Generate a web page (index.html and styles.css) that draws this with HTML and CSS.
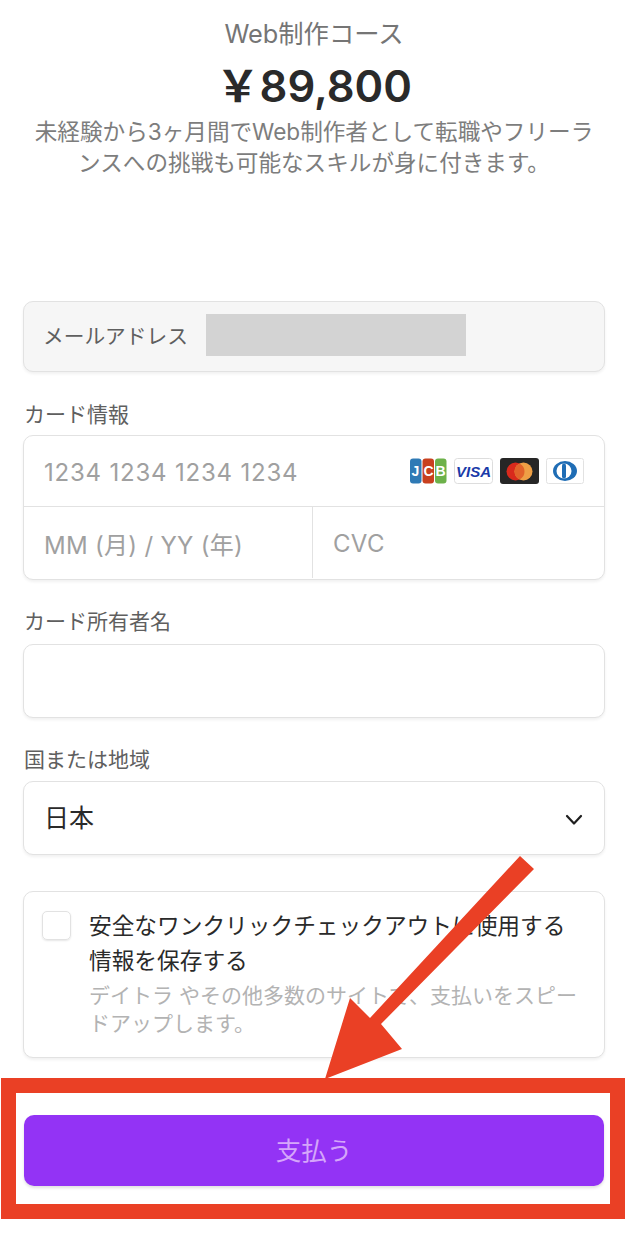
FILE: index.html
```html
<!DOCTYPE html>
<html lang="ja">
<head>
<meta charset="utf-8">
<title>支払い</title>
<link rel="stylesheet" href="styles.css">
</head>
<body>
<main class="page">
  <header class="summary">
    <div class="course">Web制作コース</div>
    <div class="price">&#xFFE5;89,800</div>
    <p class="desc">未経験から3ヶ月間でWeb制作者として転職やフリーランスへの挑戦も可能なスキルが身に付きます。</p>
  </header>

  <div class="field email">
    <span class="email-label">メールアドレス</span>
    <span class="redacted"></span>
  </div>

  <div class="label label-card">カード情報</div>
  <div class="field card">
    <div class="card-row">
      <span class="ph ph-num">1234 1234 1234 1234</span>
      <span class="brands">
        <svg class="brand" width="38" height="26" viewBox="0 0 38 26">
          <rect x="1" y="0.5" width="11.500" height="25" rx="3" fill="#2f7ab5"/>
          <rect x="13.500" y="0.5" width="11.500" height="25" rx="3" fill="#c8401f"/>
          <rect x="26" y="0.5" width="11.500" height="25" rx="3" fill="#6db14a"/>
          <text class="jcb" x="6.500" y="17.500">J</text>
          <text class="jcb" x="19.500" y="17.500">C</text>
          <text class="jcb" x="31.500" y="17.500">B</text>
        </svg>
        <svg class="brand" width="39" height="26" viewBox="0 0 39 26">
          <rect x="0.500" y="0.500" width="38" height="25" rx="3" fill="#fff" stroke="#ddd"/>
          <text class="visa" x="19.500" y="18.500">VISA</text>
        </svg>
        <svg class="brand" width="39" height="26" viewBox="0 0 39 26">
          <rect x="0" y="0" width="39" height="26" rx="3" fill="#262626"/>
          <circle cx="15.500" cy="13.500" r="9" fill="#d9291c"/>
          <circle cx="23.500" cy="13.500" r="9" fill="#ee9f45"/>
          <path d="M19.500 5.440a9 9 0 0 1 0 16.120a9 9 0 0 1 0-16.120z" fill="#e2622a"/>
        </svg>
        <svg class="brand" width="38" height="26" viewBox="0 0 38 26">
          <rect x="0.500" y="0.500" width="37" height="25" rx="2" fill="#fff" stroke="#e2e2e2"/>
          <ellipse cx="19" cy="13" rx="12" ry="10" fill="#1f6db5"/>
          <circle cx="18" cy="13" r="7.500" fill="#fff"/>
          <rect x="16" y="5.500" width="4" height="15" rx="2" fill="#1f6db5"/>
        </svg>
      </span>
    </div>
    <div class="card-split">
      <span class="ph cell cell-exp">MM (月) / YY (年)</span>
      <span class="ph cell cell-cvc">CVC</span>
    </div>
  </div>

  <div class="label label-name">カード所有者名</div>
  <div class="field blank"></div>

  <div class="label label-country">国または地域</div>
  <div class="field select">
    <span class="select-value">日本</span>
    <svg class="chevron" width="18" height="12" viewBox="0 0 18 12"><path d="M2 2l7 7.500L16 2" fill="none" stroke="#1f1f1f" stroke-width="2.200" stroke-linecap="round" stroke-linejoin="round"/></svg>
  </div>

  <div class="field save">
    <span class="checkbox"></span>
    <div class="save-text">
      <div class="save-title">安全なワンクリックチェックアウトに使用する情報を保存する</div>
      <div class="save-sub">デイトラ やその他多数のサイトで、支払いをスピードアップします。</div>
    </div>
  </div>

  <button class="pay" type="button">支払う</button>
</main>

<div class="frame"></div>
<svg class="arrow" width="626" height="1248" viewBox="0 0 626 1248">
  <polygon points="520,856 534,869 381,1024 402,1049 325,1079 350,998 370,1018" fill="#ea4025"/>
</svg>
</body>
</html>
```
FILE: styles.css
```css
* { box-sizing: border-box; }
html, body { margin: 0; padding: 0; background: #fff; }
body {
  position: relative;
  width: 626px;
  height: 1248px;
  overflow: hidden;
  font-family: Inter, "Noto Sans CJK JP", sans-serif;
  color: #1f1f1f;
}
.page { padding: 17px 21px 0 23px; }

.summary { text-align: center; height: 284px; }
.course { font-size: 25.300px; line-height: 34px; color: #757575; }
.price {
  margin-top: 8px;
  font-size: 43.500px;
  line-height: 54px;
  font-weight: 600;
  color: #2a2a2a;
}
.desc {
  margin: 3px 0 0;
  padding: 0 9px;
  font-size: 22.600px;
  line-height: 31px;
  color: #7d7d7d;
}

.field {
  background: #fff;
  border: 1.500px solid #e2e2e2;
  border-radius: 10px;
  box-shadow: 0 2px 3px rgba(0, 0, 0, 0.06);
}

.email {
  display: flex;
  align-items: center;
  height: 71px;
  padding: 0 0 4px 19px;
  background: #f6f6f6;
}
.email-label { font-size: 20.700px; color: #5f5f5f; width: 163px; }
.redacted { display: block; width: 260px; height: 42px; background: #d3d3d3; }

.label { font-size: 21px; line-height: 26px; color: #5f5f5f; padding-left: 1px; }
.label-card { margin-top: 30px; }
.label-name { margin-top: 29px; }
.label-country { margin-top: 29px; }

.card { margin-top: 7px; height: 145px; }
.card-row {
  display: flex;
  align-items: center;
  justify-content: space-between;
  height: 71px;
  padding: 0 20px;
  border-bottom: 1.500px solid #e2e2e2;
}
.ph { font-size: 24px; color: #a0a0a0; letter-spacing: 0.300px; }
.ph-num { letter-spacing: 0.800px; padding-top: 2px; }
.brands { display: flex; align-items: center; gap: 7px; }
.brand { display: block; }
.jcb { font: 700 14px "Liberation Sans", sans-serif; fill: #fff; text-anchor: middle; }
.visa {
  font: italic 700 15px "Liberation Sans", sans-serif;
  fill: #1a3aa8;
  text-anchor: middle;
}
.card-split { display: flex; height: 71px; }
.cell { display: flex; align-items: center; padding-top: 2px; }
.cell-exp { width: 289px; padding-left: 20px; border-right: 1.500px solid #e2e2e2; }
.cell-cvc { padding-left: 20px; }

.blank { margin-top: 9px; height: 74px; }

.select {
  margin-top: 8px;
  height: 74px;
  display: flex;
  align-items: center;
  justify-content: space-between;
  padding: 0 21px 0 20px;
}
.select-value { font-size: 25px; color: #2a2a2a; margin-bottom: 4px; }
.chevron { margin-top: 3px; }

.save {
  margin-top: 36px;
  height: 167px;
  display: flex;
  padding: 19px 20px 0 18px;
}
.checkbox {
  flex: none;
  width: 29px;
  height: 29px;
  border: 1.500px solid #e2e2e2;
  border-radius: 5px;
  box-shadow: 0 1px 2px rgba(0, 0, 0, 0.1);
}
.save-text { margin-left: 18px; margin-top: -3px; }
.save-title { font-size: 22.700px; line-height: 35px; color: #2a2a2a; }
.save-sub { margin-top: 4px; font-size: 21px; line-height: 27.500px; color: #b3b3b3; }

.pay {
  display: block;
  margin: 57px 0 0 1px;
  width: 580px;
  height: 71px;
  padding: 0 0 4px;
  border: 0;
  border-radius: 10px;
  background: #9333f5;
  box-shadow: 0 2px 3px rgba(0, 0, 0, 0.12);
  color: #d5a6fa;
  font: inherit;
  font-size: 25.500px;
}

.frame {
  position: absolute;
  left: 1px;
  top: 1078px;
  width: 624px;
  height: 141px;
  border: 15px solid #ea4025;
}
.arrow { position: absolute; left: 0; top: 0; }
```
